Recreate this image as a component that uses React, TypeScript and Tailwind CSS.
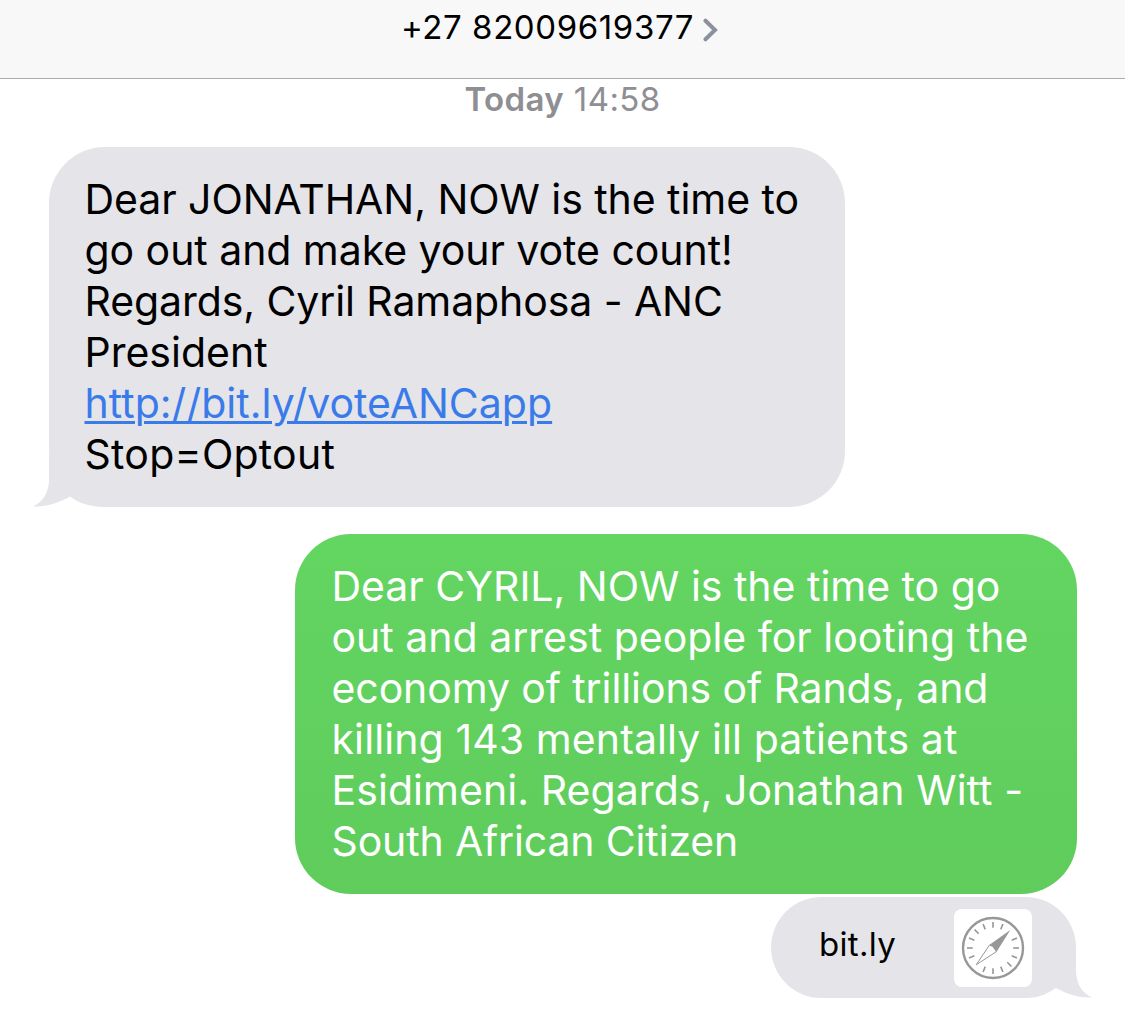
import React from 'react';

const received = [
  { text: 'Dear JONATHAN, NOW is the time to', tracking: 'tracking-[-0.06px]' },
  { text: 'go out and make your vote count!', tracking: 'tracking-[-0.05px]' },
  { text: 'Regards, Cyril Ramaphosa - ANC', tracking: 'tracking-[-0.09px]' },
  { text: 'President', tracking: 'tracking-[0px]' },
  { text: 'http://bit.ly/voteANCapp', tracking: 'tracking-[0.02px]', link: true },
  { text: 'Stop=Optout', tracking: 'tracking-[0.25px]' },
];

const sent = [
  { text: 'Dear CYRIL, NOW is the time to go', tracking: 'tracking-[-0.02px]' },
  { text: 'out and arrest people for looting the', tracking: 'tracking-[0.01px]' },
  { text: 'economy of trillions of Rands, and', tracking: 'tracking-[-0.1px]' },
  { text: 'killing 143 mentally ill patients at', tracking: 'tracking-[0.1px]' },
  { text: 'Esidimeni. Regards, Jonathan Witt -', tracking: 'tracking-[0.06px]' },
  { text: 'South African Citizen', tracking: 'tracking-[-0.15px]' },
];

const Lines = ({ lines }: { lines: { text: string; tracking: string; link?: boolean }[] }) => (
  <>
    {lines.map((line) => (
      <div key={line.text} className={`whitespace-nowrap ${line.tracking}`}>
        {line.link ? (
          <a href="#" className="text-[#3a7bea] underline decoration-[3px] underline-offset-[3px] [text-decoration-skip-ink:auto]">{line.text}</a>
        ) : (
          line.text
        )}
      </div>
    ))}
  </>
);

const Tail = ({ className }: { className: string }) => (
  <svg viewBox="0 0 76 50" className={`absolute bottom-0 h-[50px] w-[76px] ${className}`} fill="#e5e4e9">
    <path d="M16 0V25C15 36 10 45 0 49.5C15 50 27 45 37 39.5C46 46 56 50 76 50V0Z" />
  </svg>
);

const Compass = () => (
  <svg viewBox="0 0 78 78" className="h-[78px] w-[78px]" fill="none" stroke="#979797">
    <circle cx="39" cy="39" r="30" strokeWidth="2.4" />
    {/* the needle covers the ticks at both of its ends */}
    {Array.from({ length: 16 }, (_, i) => i)
      .filter((i) => ![2, 10].includes(i))
      .map((i) => (
        <line key={i} x1="39" y1="13" x2="39" y2="18.8" strokeWidth="1.6" transform={`rotate(${i * 22.5} 39 39)`} />
      ))}
    <path d="M56.3 21L35.2 36L38.8 37.2L42.6 42.8Z" fill="#979797" stroke="none" />
    <path d="M35.4 36.2L22.2 55.8L42.4 42.6L38.8 37.4Z" strokeWidth="1" />
  </svg>
);

export default function App() {
  return (
    <div className="h-[1011px] w-[1125px] overflow-hidden bg-white font-['Inter',sans-serif] text-black">
      <header className="flex h-[79px] items-start justify-center border-b border-[#acacad] bg-[#f8f8f9] pt-[7px]">
        <div className="flex items-center gap-[9px] pr-[6px]">
          <span className="text-[33px] leading-[40px] tracking-[0.6px]">+27 82009619377</span>
          <svg viewBox="0 0 15 24" className="mt-[5px] h-[24px] w-[15px]" fill="none" stroke="#8b919d" strokeWidth="4" strokeLinecap="round" strokeLinejoin="miter">
            <path d="M2.5 2.7L12 12L2.5 21.3" />
          </svg>
        </div>
      </header>

      <div className="flex h-[68px] justify-center text-[33px] leading-[41px] tracking-[0.4px] text-[#8e8e93]">
        <span className="whitespace-pre"><b className="font-semibold">Today</b> 14:58</span>
      </div>

      <main className="flex flex-col">
        <div className="relative ml-[49px] h-[360px] w-[796px] rounded-[56px] bg-[#e5e4e9] pt-[27px] pl-[35.5px] text-[41px] leading-[51px]">
          <Tail className="-left-[16px]" />
          <div className="relative">
            <Lines lines={received} />
          </div>
        </div>

        <div className="mt-[27px] ml-[295px] h-[360px] w-[782px] rounded-[56px] bg-linear-to-b from-[#63d561] to-[#5fcc5c] pt-[27px] pl-[36.5px] text-[41px] leading-[51px] text-white">
          <Lines lines={sent} />
        </div>

        <div className="relative mt-[3px] ml-[771px] flex h-[101px] w-[305px] items-center justify-between rounded-[51px] bg-[#e5e4e9] pr-[44px] pl-[48px]">
          <Tail className="-right-[16px] -scale-x-100" />
          <span className="mb-[8px] text-[33px] leading-[40px] tracking-[0.3px]">bit.ly</span>
          <div className="relative h-[78px] w-[78px] rounded-[8px] bg-white">
            <Compass />
          </div>
        </div>
      </main>
    </div>
  );
}
